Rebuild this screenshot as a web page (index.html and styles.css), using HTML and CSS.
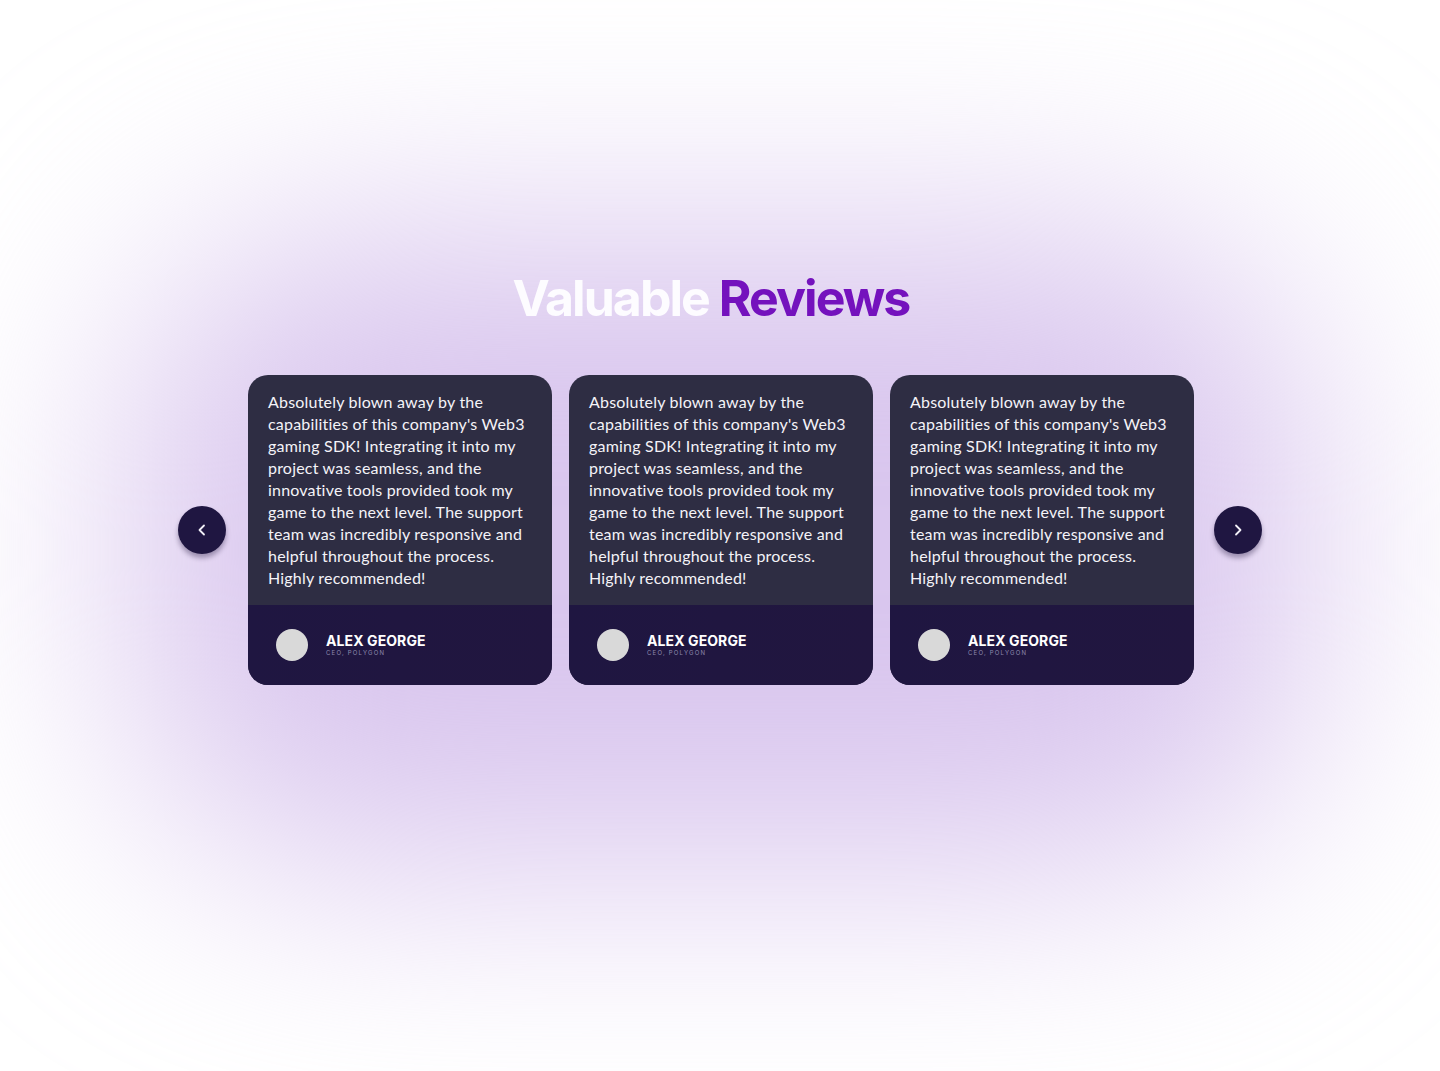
FILE: index.html
```html
<!DOCTYPE html>
<html lang="en">
<head>
<meta charset="utf-8">
<title>Valuable Reviews</title>
<link rel="stylesheet" href="styles.css">
</head>
<body>
<div class="glow"></div>
<section class="reviews">
  <h1 class="title"><span class="title-light">Valuable</span> <span class="title-accent">Reviews</span></h1>
  <div class="carousel">
    <button class="nav-btn nav-prev" aria-label="Previous">
      <svg width="16" height="16" viewBox="0 0 16 16"><path d="M10 3.5 L5.5 8 L10 12.5" fill="none" stroke="#f2f0f7" stroke-width="1.8" stroke-linecap="round" stroke-linejoin="round"/></svg>
    </button>
    <div class="cards">
      <article class="card">
        <p class="card-text">Absolutely blown away by the capabilities of this company's Web3 gaming SDK! Integrating it into my project was seamless, and the innovative tools provided took my game to the next level. The support team was incredibly responsive and helpful throughout the process. Highly recommended!</p>
        <div class="card-footer">
          <div class="avatar"></div>
          <div class="author">
            <div class="author-name">ALEX GEORGE</div>
            <div class="author-role">CEO, POLYGON</div>
          </div>
        </div>
      </article>
      <article class="card">
        <p class="card-text">Absolutely blown away by the capabilities of this company's Web3 gaming SDK! Integrating it into my project was seamless, and the innovative tools provided took my game to the next level. The support team was incredibly responsive and helpful throughout the process. Highly recommended!</p>
        <div class="card-footer">
          <div class="avatar"></div>
          <div class="author">
            <div class="author-name">ALEX GEORGE</div>
            <div class="author-role">CEO, POLYGON</div>
          </div>
        </div>
      </article>
      <article class="card">
        <p class="card-text">Absolutely blown away by the capabilities of this company's Web3 gaming SDK! Integrating it into my project was seamless, and the innovative tools provided took my game to the next level. The support team was incredibly responsive and helpful throughout the process. Highly recommended!</p>
        <div class="card-footer">
          <div class="avatar"></div>
          <div class="author">
            <div class="author-name">ALEX GEORGE</div>
            <div class="author-role">CEO, POLYGON</div>
          </div>
        </div>
      </article>
    </div>
    <button class="nav-btn nav-next" aria-label="Next">
      <svg width="16" height="16" viewBox="0 0 16 16"><path d="M6 3.5 L10.5 8 L6 12.5" fill="none" stroke="#f2f0f7" stroke-width="1.8" stroke-linecap="round" stroke-linejoin="round"/></svg>
    </button>
  </div>
</section>
</body>
</html>
```
FILE: styles.css
```css
* { box-sizing: border-box; }
html, body { margin: 0; padding: 0; }
body {
  width: 1440px;
  height: 1071px;
  background: #ffffff;
  font-family: "Lato", "Open Sans", sans-serif;
  overflow: hidden;
  position: relative;
}
.glow {
  position: absolute;
  left: 130px;
  top: 230px;
  width: 1180px;
  height: 640px;
  border-radius: 220px;
  background: #d9c6ee;
  filter: blur(115px);
  z-index: 0;
}
.reviews {
  position: relative;
  z-index: 1;
  display: flex;
  flex-direction: column;
  align-items: center;
  padding-top: 268px;
}
.title {
  margin: 0 0 47px;
  font-family: "Inter", "Lato", sans-serif;
  font-weight: 700;
  font-size: 50px;
  line-height: 60px;
  letter-spacing: -1.95px;
  transform: translateX(-9px);
}
.title-light { color: #fdfcff; }
.title-accent { color: #7412bd; }
.carousel {
  display: flex;
  align-items: center;
}
.nav-btn {
  width: 48px;
  height: 48px;
  border-radius: 50%;
  border: none;
  padding: 0;
  background: #1f1641;
  display: flex;
  align-items: center;
  justify-content: center;
  box-shadow: 0 4px 5px rgba(20, 10, 50, 0.35);
}
.nav-prev { margin-right: 22px; }
.nav-next { margin-left: 20px; }
.cards {
  display: flex;
  gap: 17px;
}
.card {
  width: 304px;
  border-radius: 20px;
  overflow: hidden;
  background: #2e2d43;
  display: flex;
  flex-direction: column;
}
.card-text {
  margin: 0;
  padding: 16px 14px 16px 20px;
  height: 230px;
  color: #f4f3f8;
  font-size: 16px;
  line-height: 22px;
  font-weight: 400;
  letter-spacing: 0.2px;
}
.card-footer {
  height: 80px;
  background: linear-gradient(90deg, #1f1641, #21163f);
  display: flex;
  align-items: center;
  padding-left: 28px;
  gap: 18px;
}
.avatar {
  width: 32px;
  height: 32px;
  border-radius: 50%;
  background: #d9d9d9;
}
.author { display: flex; flex-direction: column; }
.author-name {
  font-family: "Inter", "Lato", sans-serif;
  font-weight: 700;
  font-size: 14px;
  line-height: 16px;
  color: #ffffff;
  letter-spacing: 0.1px;
}
.author-role {
  font-family: "Inter", "Lato", sans-serif;
  font-size: 6px;
  line-height: 8px;
  letter-spacing: 1.2px;
  color: #8e8aae;
}
```
